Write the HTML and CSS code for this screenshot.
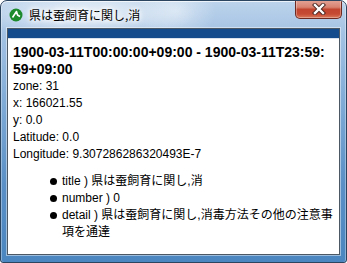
FILE: index.html
```html
<!DOCTYPE html>
<html lang="ja">
<head>
    <meta charset="UTF-8">
    <title>県は蚕飼育に関し,消</title>
    <link rel="stylesheet" href="styles.css">
</head>
<body>
    <div class="window">
        <div class="titlebar">
            <svg class="app-icon" width="14" height="14" viewBox="0 0 14 14">
                <circle cx="7" cy="7" r="6.5" fill="#1d8a2c"/>
                <path d="M3.5 9.5 L7.5 3.5 L8.5 7 L11 8.5" fill="none" stroke="#fff" stroke-width="1.6" stroke-linejoin="round"/>
            </svg>
            <span class="title">県は蚕飼育に関し,消</span>
            <div class="close">
                <svg width="14" height="12" viewBox="0 0 14 12">
                    <path d="M3 2 L11 10 M11 2 L3 10" stroke="#4a2520" stroke-width="4.2" stroke-linecap="square"/>
                    <path d="M3 2 L11 10 M11 2 L3 10" stroke="#fff" stroke-width="2.4" stroke-linecap="square"/>
                </svg>
            </div>
        </div>

        <div class="client">
            <div class="bar"></div>
            <div class="popup">
                <div class="period">1900-03-11T00:00:00+09:00 - 1900-03-11T23:59:<br>59+09:00</div>
                <div>zone: 31</div>
                <div>x: 166021.55</div>
                <div>y: 0.0</div>
                <div>Latitude: 0.0</div>
                <div>Longitude: 9.307286286320493E-7</div>
                <ul class="props">
                    <li>title ) 県は蚕飼育に関し,消</li>
                    <li>number ) 0</li>
                    <li>detail ) 県は蚕飼育に関し,消毒方法その他の注意事項を通達</li>
                </ul>
            </div>
        </div>
    </div>
</body>
</html>
```

FILE: styles.css
```css
body {
    margin: 0;
    font-family: 'Liberation Sans', Arial, 'Noto Sans CJK JP', sans-serif;
}

.window {
    width: 347px;
    height: 263px;
    box-sizing: border-box;
    border: 1px solid #2b4561;
    border-radius: 7px 7px 3px 3px;
    display: flex;
    flex-direction: column;
    overflow: hidden;
    background:
        radial-gradient(ellipse 110px 26px at 85px 13px, rgba(255,255,255,0.75), rgba(255,255,255,0) 100%),
        radial-gradient(ellipse 40px 30px at 175px 10px, rgba(255,255,255,0.45), rgba(255,255,255,0) 100%),
        linear-gradient(180deg, #bcd3eb 0, #a5c3e4 12%, #7eaad6 40%, #5a90c6 70%, #4b86c0 100%);
    box-shadow: inset 0 1px 0 rgba(255,255,255,0.7), inset 1px 0 0 rgba(255,255,255,0.35), inset -1px 0 0 rgba(255,255,255,0.35);
}

.titlebar {
    height: 27px;
    display: flex;
    align-items: center;
    flex: none;
}

.app-icon {
    margin-left: 8px;
    flex: none;
}

.title {
    margin-left: 6px;
    font-family: 'Noto Sans CJK JP', sans-serif;
    font-size: 12px;
    color: #000;
    text-shadow: 0 0 4px #fff, 0 0 6px #fff, 0 0 8px rgba(255,255,255,0.8);
}

.close {
    align-self: flex-start;
    margin-left: auto;
    margin-right: 4px;
    margin-top: -1px;
    width: 47px;
    height: 19px;
    box-sizing: border-box;
    border: 1px solid #6e2a21;
    border-top: none;
    border-radius: 0 0 5px 5px;
    background: linear-gradient(180deg, #e3a597 0, #d88270 40%, #c2452f 52%, #c64b33 78%, #d97a5c 100%);
    box-shadow: inset 0 0 0 1px rgba(255,255,255,0.3);
    display: flex;
    align-items: center;
    justify-content: center;
}

.client {
    flex: none;
    height: 227px;
    margin: 0 6px;
    box-sizing: border-box;
    border: 1px solid #4c5864;
    background: #fff;
    display: flex;
    flex-direction: column;
    box-shadow: 0 0 0 1px rgba(255,255,255,0.45);
}

.bar {
    height: 9px;
    background: #134b8c;
    border-bottom: 1px solid #d9e2ec;
    flex: none;
}

.popup {
    padding: 5px 2px 0 5px;
    font-size: 12px;
    line-height: 17px;
    color: #000;
}

.period {
    font-weight: bold;
    font-size: 14px;
}

.props {
    list-style: none;
    margin: 10px 0 0;
    padding: 0 0 0 37px;
}

.props li {
    display: flex;
    gap: 5px;
}

.props li::before {
    content: "";
    flex: none;
    width: 7px;
    height: 7px;
    margin-top: 5px;
    border-radius: 50%;
    background: #000;
}
```
